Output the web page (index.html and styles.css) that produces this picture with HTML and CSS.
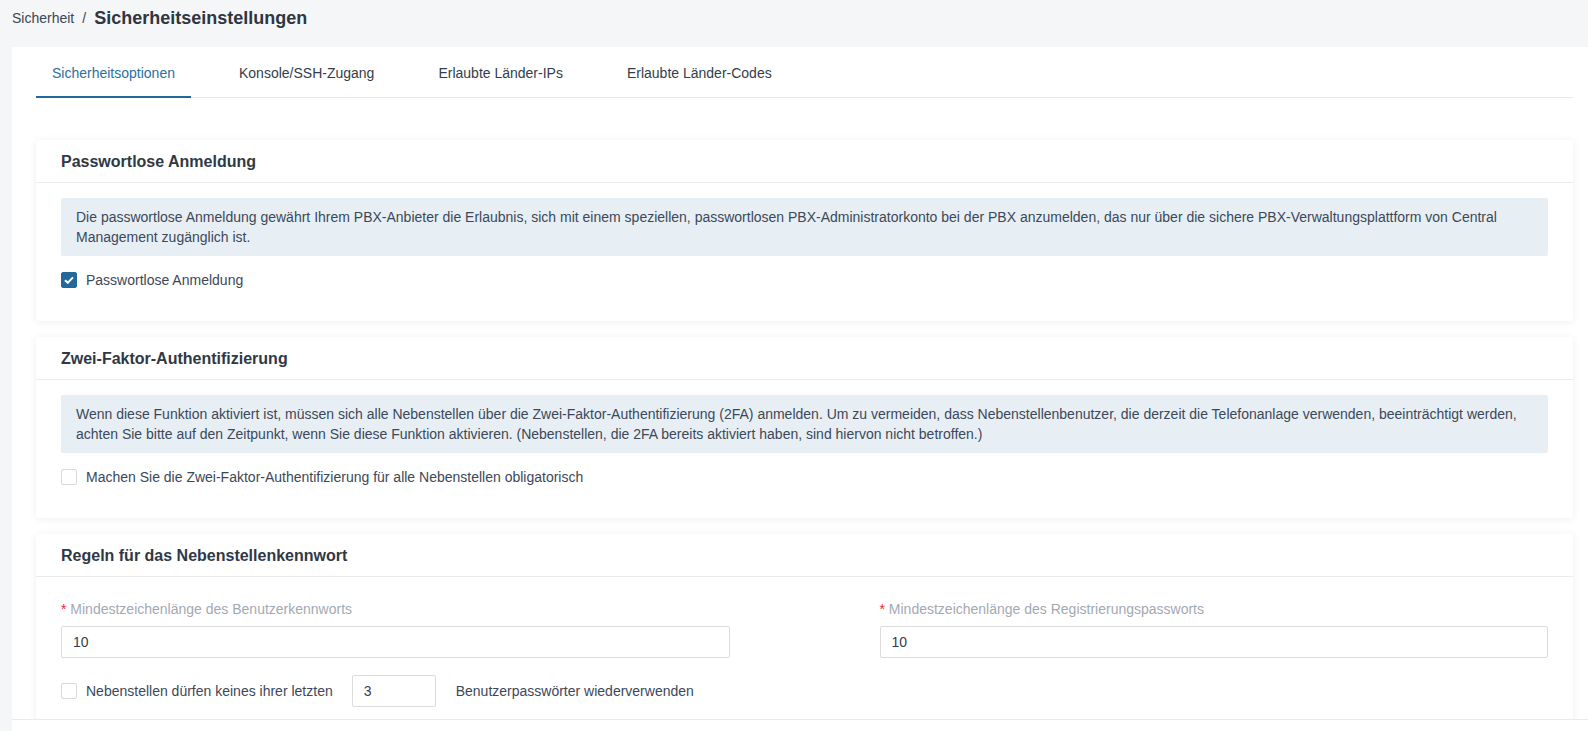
FILE: index.html
```html
<!DOCTYPE html>
<html lang="de">
<head>
    <meta charset="UTF-8">
    <meta name="viewport" content="width=device-width, initial-scale=1.0">
    <title>Sicherheitseinstellungen</title>
    <link rel="stylesheet" href="styles.css">
</head>
<body>
    <div class="breadcrumb">
        <span class="crumb">Sicherheit</span>
        <span class="sep">/</span>
        <span class="page-title">Sicherheitseinstellungen</span>
    </div>

    <div class="container">
        <div class="tabs">
            <div class="tab active">Sicherheitsoptionen</div>
            <div class="tab">Konsole/SSH-Zugang</div>
            <div class="tab">Erlaubte Länder-IPs</div>
            <div class="tab">Erlaubte Länder-Codes</div>
        </div>

        <div class="cards">
            <div class="card">
                <div class="card-header">Passwortlose Anmeldung</div>
                <div class="card-body">
                    <div class="info">Die passwortlose Anmeldung gewährt Ihrem PBX-Anbieter die Erlaubnis, sich mit einem speziellen, passwortlosen PBX-Administratorkonto bei der PBX anzumelden, das nur über die sichere PBX-Verwaltungsplattform von Central Management zugänglich ist.</div>
                    <label class="check-row">
                        <span class="checkbox checked">
                            <svg width="10" height="8" viewBox="0 0 10 8"><path d="M1 4.2 L3.8 6.8 L9 1.4" fill="none" stroke="#fff" stroke-width="2"/></svg>
                        </span>
                        Passwortlose Anmeldung
                    </label>
                </div>
            </div>

            <div class="card">
                <div class="card-header">Zwei-Faktor-Authentifizierung</div>
                <div class="card-body">
                    <div class="info">Wenn diese Funktion aktiviert ist, müssen sich alle Nebenstellen über die Zwei-Faktor-Authentifizierung (2FA) anmelden. Um zu vermeiden, dass Nebenstellenbenutzer, die derzeit die Telefonanlage verwenden, beeinträchtigt werden, achten Sie bitte auf den Zeitpunkt, wenn Sie diese Funktion aktivieren. (Nebenstellen, die 2FA bereits aktiviert haben, sind hiervon nicht betroffen.)</div>
                    <label class="check-row">
                        <span class="checkbox"></span>
                        Machen Sie die Zwei-Faktor-Authentifizierung für alle Nebenstellen obligatorisch
                    </label>
                </div>
            </div>

            <div class="card">
                <div class="card-header">Regeln für das Nebenstellenkennwort</div>
                <div class="card-body form-body">
                    <div class="form-grid">
                        <div class="field">
                            <div class="field-label"><span class="req">*</span> Mindestzeichenlänge des Benutzerkennworts</div>
                            <div class="input">10</div>
                        </div>
                        <div class="field">
                            <div class="field-label"><span class="req">*</span> Mindestzeichenlänge des Registrierungspassworts</div>
                            <div class="input">10</div>
                        </div>
                    </div>
                    <div class="reuse-row">
                        <span class="checkbox"></span>
                        <span>Nebenstellen dürfen keines ihrer letzten</span>
                        <div class="input small">3</div>
                        <span>Benutzerpasswörter wiederverwenden</span>
                    </div>
                </div>
            </div>
        </div>
    </div>

    <div class="footer-bar"></div>
</body>
</html>
```

FILE: styles.css
```css
body {
    font-family: "Liberation Sans", Arial, sans-serif;
    font-size: 14px;
    color: #3c4858;
    margin: 0;
    padding: 0;
    background-color: #f5f6f8;
    height: 731px;
    overflow: hidden;
}
.breadcrumb {
    display: flex;
    align-items: center;
    height: 36px;
    padding-left: 12px;
}
.crumb {
    font-size: 14px;
    color: #3c4654;
}
.sep {
    margin: 0 8px;
    color: #3c4654;
}
.page-title {
    font-size: 18px;
    font-weight: bold;
    color: #2f3640;
}
.container {
    margin: 11px 0 0 12px;
    padding: 0 15px 0 24px;
    background: white;
    height: 700px;
}
.tabs {
    display: flex;
    border-bottom: 1px solid #e8e8e8;
}
.tab {
    padding: 16px 16px 13px;
    line-height: 20px;
    margin-right: 32px;
    margin-bottom: -1px;
    border-bottom: 2px solid transparent;
    color: #333d4a;
}
.tab.active {
    color: #2a70a0;
    border-bottom-color: #23689a;
}
.cards {
    padding-top: 42px;
}
.card {
    background: #fff;
    border-radius: 3px;
    box-shadow: 0 1px 8px rgba(0, 0, 0, 0.07);
    margin-bottom: 16px;
}
.card-header {
    padding: 12px 25px 10px;
    line-height: 20px;
    font-size: 16px;
    font-weight: bold;
    color: #303845;
    border-bottom: 1px solid #ebebeb;
}
.card-body {
    padding: 15px 25px 31px;
}
.info {
    background: #e7eff5;
    border-radius: 2px;
    padding: 9px 15px;
    line-height: 20px;
}
.check-row {
    display: flex;
    align-items: center;
    gap: 9px;
    margin-top: 14px;
    line-height: 20px;
}
.checkbox {
    display: inline-flex;
    align-items: center;
    justify-content: center;
    width: 14px;
    height: 14px;
    border: 1px solid #d9d9d9;
    border-radius: 2px;
    background: #fff;
    flex-shrink: 0;
}
.checkbox.checked {
    background: #23689a;
    border-color: #23689a;
}
.form-body {
    padding-top: 22px;
}
.form-grid {
    display: grid;
    grid-template-columns: 1fr 1fr;
    column-gap: 150px;
}
.field-label {
    line-height: 20px;
    color: #a3a9b3;
    margin-bottom: 7px;
}
.req {
    color: #f5222d;
}
.input {
    height: 30px;
    line-height: 30px;
    border: 1px solid #dcdcdc;
    border-radius: 2px;
    padding: 0 11px;
    font-size: 14px;
    color: #333d4a;
}
.input.small {
    width: 60px;
}
.reuse-row {
    display: flex;
    align-items: center;
    margin-top: 17px;
}
.reuse-row .checkbox {
    margin-right: 9px;
}
.reuse-row .input {
    margin: 0 20px 0 19px;
}
.footer-bar {
    position: fixed;
    left: 12px;
    right: 0;
    bottom: 0;
    height: 11px;
    background: #fff;
    border-top: 1px solid #ebebeb;
}
```
